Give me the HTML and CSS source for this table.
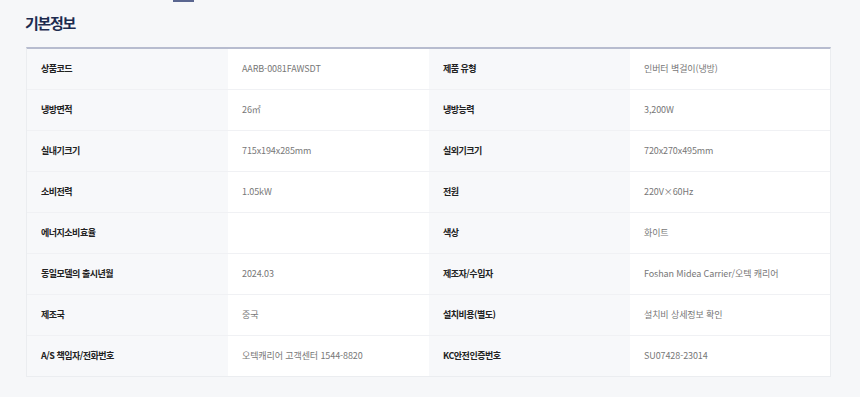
FILE: index.html
```html
<!DOCTYPE html>
<html lang="ko">
<head>
<meta charset="utf-8">
<link rel="stylesheet" href="styles.css">
</head>
<body>
<div class="page">
  <div class="topbar"><span class="tab-indicator"></span></div>
  <h2 class="title">기본정보</h2>
  <div class="spec">
    <div class="row">
      <div class="th">상품코드</div><div class="td">AARB-0081FAWSDT</div>
      <div class="th">제품 유형</div><div class="td">인버터 벽걸이(냉방)</div>
    </div>
    <div class="row">
      <div class="th">냉방면적</div><div class="td">26㎡</div>
      <div class="th">냉방능력</div><div class="td">3,200W</div>
    </div>
    <div class="row">
      <div class="th">실내기크기</div><div class="td">715x194x285mm</div>
      <div class="th">실외기크기</div><div class="td">720x270x495mm</div>
    </div>
    <div class="row">
      <div class="th">소비전력</div><div class="td">1.05kW</div>
      <div class="th">전원</div><div class="td">220V×60Hz</div>
    </div>
    <div class="row">
      <div class="th">에너지소비효율</div><div class="td"></div>
      <div class="th">색상</div><div class="td">화이트</div>
    </div>
    <div class="row">
      <div class="th">동일모델의 출시년월</div><div class="td">2024.03</div>
      <div class="th">제조자/수입자</div><div class="td">Foshan Midea Carrier/오텍 캐리어</div>
    </div>
    <div class="row">
      <div class="th">제조국</div><div class="td">중국</div>
      <div class="th">설치비용(별도)</div><div class="td">설치비 상세정보 확인</div>
    </div>
    <div class="row">
      <div class="th">A/S 책임자/전화번호</div><div class="td">오텍캐리어 고객센터 1544-8820</div>
      <div class="th">KC안전인증번호</div><div class="td">SU07428-23014</div>
    </div>
  </div>
</div>
</body>
</html>
```
FILE: styles.css
```css
* { box-sizing: border-box; }
html, body { margin: 0; padding: 0; }
body {
  background: #f6f7f9;
  font-family: "Noto Sans CJK KR", "Noto Sans", sans-serif;
  width: 860px;
  height: 397px;
  overflow: hidden;
}
.page { padding: 0 29px 0 26px; }
.topbar { height: 2px; position: relative; }
.tab-indicator {
  position: absolute;
  left: 147px;
  top: 0;
  width: 21px;
  height: 2px;
  background: #5a6690;
}
.title {
  margin: 9px 0 0 -1px;
  font-size: 15px;
  line-height: 24px;
  font-weight: 700;
  color: #1d2b4f;
  letter-spacing: -1.3px;
}
.spec {
  margin-top: 12px;
  border-top: 2px solid #b7bccf;
  border-left: 1px solid #ebedf0;
  border-right: 1px solid #ebedf0;
  border-bottom: 1px solid #ebedf0;
  width: 805px;
}
.row {
  display: grid;
  grid-template-columns: 201px 201px 201px 1fr;
  height: 41px;
  border-bottom: 1px solid #f0f1f4;
}
.row:last-child { border-bottom: none; height: 40px; }
.th, .td {
  display: flex;
  align-items: center;
  padding-left: 14px;
  padding-bottom: 1px;
  font-size: 9px;
}
.th {
  background: #f7f8fa;
  color: #222;
  font-weight: 700;
  letter-spacing: -0.5px;
}
.td {
  background: #fff;
  color: #777;
  font-weight: 400;
  letter-spacing: -0.1px;
}
```
